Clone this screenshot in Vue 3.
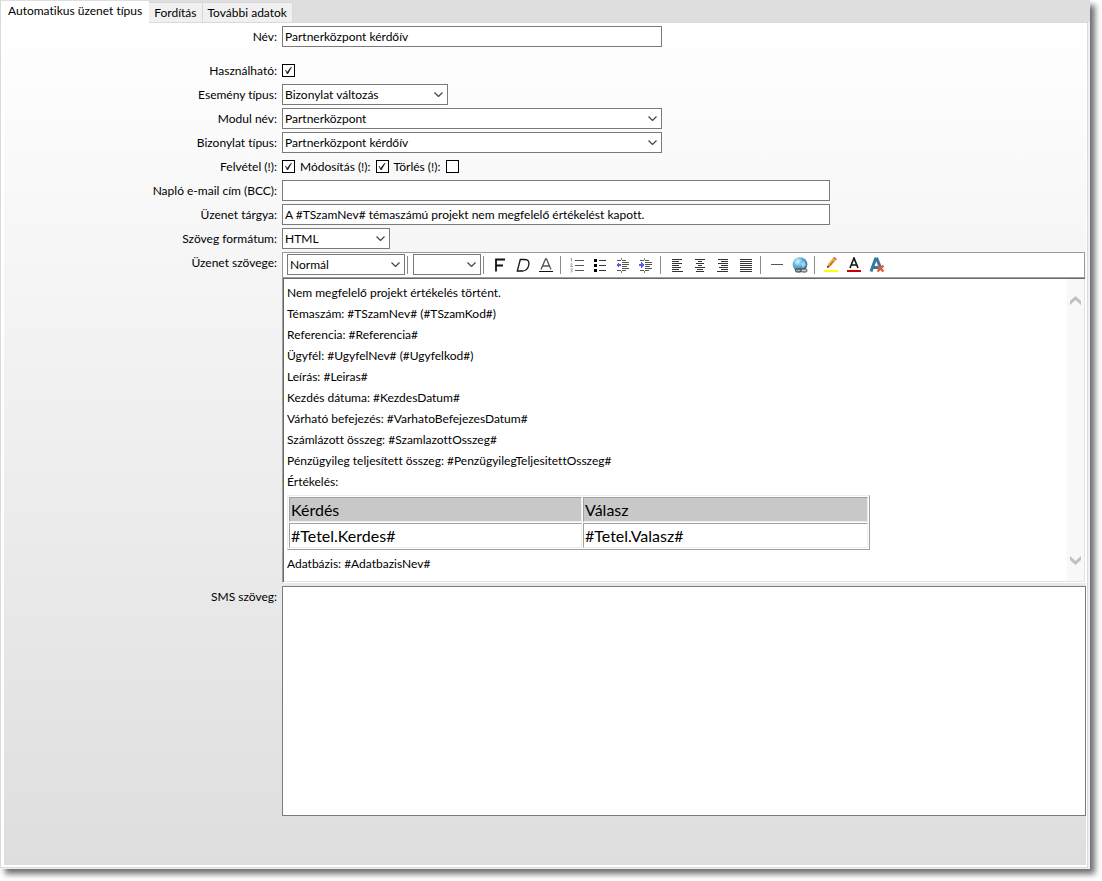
<script setup>
import { ref } from 'vue'

const tabs = ['Automatikus üzenet típus', 'Fordítás', 'További adatok']
const activeTab = ref(0)

const form = ref({
  name: 'Partnerközpont kérdőív',
  usable: true,
  event: 'Bizonylat változás',
  module: 'Partnerközpont',
  document: 'Partnerközpont kérdőív',
  onInsert: true,
  onUpdate: true,
  onDelete: false,
  bcc: '',
  subject: 'A #TSzamNev# témaszámú projekt nem megfelelő értékelést kapott.',
  format: 'HTML',
  style: 'Normál',
  size: '',
  sms: '',
})

const bodyLines = [
  'Nem megfelelő projekt értékelés történt.',
  'Témaszám: #TSzamNev# (#TSzamKod#)',
  'Referencia: #Referencia#',
  'Ügyfél: #UgyfelNev# (#Ugyfelkod#)',
  'Leírás: #Leiras#',
  'Kezdés dátuma: #KezdesDatum#',
  'Várható befejezés: #VarhatoBefejezesDatum#',
  'Számlázott összeg: #SzamlazottOsszeg#',
  'Pénzügyileg teljesített összeg: #PenzügyilegTeljesitettOsszeg#',
  'Értékelés:',
]

const aligns = [
  { label: 'Balra igazítás', lines: [[3, 13], [3, 10], [3, 13], [3, 10], [3, 12], [3, 10], [3, 14]] },
  { label: 'Középre igazítás', lines: [[3, 13], [6, 10], [4, 12], [6, 10], [3, 13], [5, 11], [4, 12]] },
  { label: 'Jobbra igazítás', lines: [[3, 13], [6, 13], [3, 13], [6, 13], [4, 13], [6, 13], [2, 13]] },
  { label: 'Sorkizárt', lines: [[2, 14], [2, 14], [2, 14], [2, 14], [2, 14], [2, 14], [2, 14]] },
]
</script>

<template>
  <main class="window">
    <nav class="tabs" role="tablist">
      <button
        v-for="(tab, i) in tabs"
        :key="tab"
        type="button"
        role="tab"
        class="tab"
        :class="{ active: i === activeTab }"
        :aria-selected="i === activeTab"
        @click="activeTab = i"
      >{{ tab }}</button>
    </nav>

    <form class="panel" @submit.prevent>
      <div class="row first">
        <label class="caption" for="name">Név:</label>
        <input id="name" v-model="form.name" class="field medium" type="text">
      </div>

      <div class="row">
        <label class="caption" for="usable">Használható:</label>
        <input id="usable" v-model="form.usable" class="check" type="checkbox">
      </div>

      <div class="row">
        <label class="caption" for="event">Esemény típus:</label>
        <span class="combo event">
          <select id="event" v-model="form.event" class="field"><option>Bizonylat változás</option></select>
          <svg class="arrow" viewBox="0 0 9 5"><path d="M.5.5l4 4 4-4" /></svg>
        </span>
      </div>

      <div class="row">
        <label class="caption" for="module">Modul név:</label>
        <span class="combo medium">
          <select id="module" v-model="form.module" class="field"><option>Partnerközpont</option></select>
          <svg class="arrow" viewBox="0 0 9 5"><path d="M.5.5l4 4 4-4" /></svg>
        </span>
      </div>

      <div class="row">
        <label class="caption" for="document">Bizonylat típus:</label>
        <span class="combo medium">
          <select id="document" v-model="form.document" class="field"><option>Partnerközpont kérdőív</option></select>
          <svg class="arrow" viewBox="0 0 9 5"><path d="M.5.5l4 4 4-4" /></svg>
        </span>
      </div>

      <div class="row">
        <label class="caption" for="insert">Felvétel (!):</label>
        <span class="checks">
          <input id="insert" v-model="form.onInsert" class="check" type="checkbox">
          <label for="update">Módosítás (!):</label>
          <input id="update" v-model="form.onUpdate" class="check" type="checkbox">
          <label for="delete">Törlés (!):</label>
          <input id="delete" v-model="form.onDelete" class="check" type="checkbox">
        </span>
      </div>

      <div class="row">
        <label class="caption" for="bcc">Napló e-mail cím (BCC):</label>
        <input id="bcc" v-model="form.bcc" class="field wide" type="text">
      </div>

      <div class="row">
        <label class="caption" for="subject">Üzenet tárgya:</label>
        <input id="subject" v-model="form.subject" class="field wide" type="text">
      </div>

      <div class="row">
        <label class="caption" for="format">Szöveg formátum:</label>
        <span class="combo format">
          <select id="format" v-model="form.format" class="field"><option>HTML</option></select>
          <svg class="arrow" viewBox="0 0 9 5"><path d="M.5.5l4 4 4-4" /></svg>
        </span>
      </div>

      <div class="row">
        <span id="body-label" class="caption">Üzenet szövege:</span>
        <div class="editor">
          <div class="toolbar" role="toolbar" aria-label="Formázás">
            <span class="combo style">
              <select v-model="form.style" class="field" aria-label="Stílus"><option>Normál</option></select>
              <svg class="arrow" viewBox="0 0 9 5"><path d="M.5.5l4 4 4-4" /></svg>
            </span>
            <i class="rule tight" />
            <span class="combo size">
              <select v-model="form.size" class="field" aria-label="Méret"><option value="" /></select>
              <svg class="arrow" viewBox="0 0 9 5"><path d="M.5.5l4 4 4-4" /></svg>
            </span>
            <i class="rule near" />

            <button type="button" class="tool" aria-label="Félkövér">
              <svg viewBox="0 0 16 16"><path d="M4 14.500V2.500h9M4 8.500h7" fill="none" stroke="#111" stroke-width="1.800" /></svg>
            </button>
            <button type="button" class="tool" aria-label="Dőlt">
              <svg viewBox="0 0 16 16"><path d="M5.300 2.500h4.200c3.600 0 5 1.700 4.300 5.500-.8 4-3 6-6.500 6H2.300z" fill="none" stroke="#111" stroke-width="1.300" /></svg>
            </button>
            <button type="button" class="tool" aria-label="Aláhúzott">
              <svg viewBox="0 0 16 16"><path d="M3 12.500L7.500 2h1L13 12.500M4.800 9h6.400" fill="none" stroke="#555" stroke-width="1.300" /><path d="M1 14.500h14" stroke="#111" /></svg>
            </button>
            <i class="rule" />

            <button type="button" class="tool" aria-label="Számozott lista">
              <svg viewBox="0 0 16 16"><path d="M6 3.500h9M6 8.500h9M6 13.500h9" stroke="#555" /><path d="M1.500 2l1-.5v3M1.500 7q2-1 1.500.5L1.500 9.500H4M1.500 12h2l-1 1q2 1 0 2h-1" fill="none" stroke="#888" stroke-width=".8" /></svg>
            </button>
            <button type="button" class="tool" aria-label="Felsorolás">
              <svg viewBox="0 0 16 16" shape-rendering="crispEdges"><path d="M2 2h3v3H2zM2 7h3v3H2zM2 12h3v3H2z" /><path d="M7 3.500h7M7 8.500h7M7 13.500h7" stroke="#333" /></svg>
            </button>
            <button type="button" class="tool" aria-label="Behúzás csökkentése">
              <svg viewBox="0 0 16 16" shape-rendering="crispEdges"><path d="M2 3.500h4M7 3.500h4M7 5.500h7M7 7.500h7M7 9.500h5M7 11.500h7M2 13.500h4M7 13.500h4" stroke="#555" /><path d="M6.500 1v2M6.500 14v2" stroke="#777" /><path d="M1 8l3-3v2h2v2H4v2z" fill="#5757f5" /></svg>
            </button>
            <button type="button" class="tool" aria-label="Behúzás növelése">
              <svg viewBox="0 0 16 16" shape-rendering="crispEdges"><path d="M2 3.500h4M7 3.500h4M7 5.500h7M7 7.500h7M7 9.500h5M7 11.500h7M2 13.500h4M7 13.500h4" stroke="#555" /><path d="M6.500 1v2M6.500 14v2" stroke="#777" /><path d="M6 8L3 5v2H1v2h2v2z" fill="#5757f5" /></svg>
            </button>
            <i class="rule" />

            <button v-for="a in aligns" :key="a.label" type="button" class="tool" :aria-label="a.label">
              <svg viewBox="0 0 16 16" shape-rendering="crispEdges">
                <path v-for="(l, i) in a.lines" :key="i" :d="`M${l[0]} ${2.5 + i * 2}H${l[1]}`" stroke="#333" />
              </svg>
            </button>
            <i class="rule" />

            <button type="button" class="tool" aria-label="Vízszintes vonal">
              <svg viewBox="0 0 16 16"><path d="M2 7.500h12" stroke="#555" /></svg>
            </button>
            <button type="button" class="tool" aria-label="Hivatkozás">
              <svg viewBox="0 0 16 16">
                <defs>
                  <radialGradient id="globe" cx=".35" cy=".3" r=".8">
                    <stop offset="0" stop-color="#d5f1fc" /><stop offset=".4" stop-color="#64b5dd" /><stop offset="1" stop-color="#145a91" />
                  </radialGradient>
                </defs>
                <circle cx="8" cy="7.500" r="7.300" fill="url(#globe)" />
                <path d="M3 5l3-3 3 1-2 3-2 1zM9 7l3-3 2 4-3 3z" fill="#bfe8f7" opacity=".7" />
                <rect x="3.500" y="12" width="6" height="3" rx="1.500" fill="#aaa" stroke="#333" /><rect x="9" y="12" width="6" height="3" rx="1.500" fill="#ccc" stroke="#444" />
              </svg>
            </button>
            <i class="rule" />

            <button type="button" class="tool" aria-label="Kiemelés">
              <svg viewBox="0 0 16 16"><path d="M4 11l1-4 5-6 3 2-5 6z" fill="#eda93c" /><path d="M10 1l1-1 3 2-1 1z" fill="#c94b38" /><path d="M10.500 4l-4 5" stroke="#a65c1b" /><path d="M4 11l.7-2.500L6.500 10z" fill="#222" /><path d="M1 13h14v2H1z" fill="#ff0" /></svg>
            </button>
            <button type="button" class="tool" aria-label="Betűszín">
              <svg viewBox="0 0 16 16"><path d="M4 11L8 1l4 10M5.500 8h5" fill="none" stroke="#111" stroke-width="1.600" /><path d="M1 13h14v2H1z" fill="#c00" /></svg>
            </button>
            <button type="button" class="tool" aria-label="Formázás törlése">
              <svg viewBox="0 0 16 16"><path d="M2 14.500L6.500 2h1.500l4 10M4 10.500h6" fill="none" stroke="#32799e" stroke-width="3" /><path d="M8.500 8.500l6 6M14.500 8.500l-6 6" stroke="#e0583f" stroke-width="2.400" /></svg>
            </button>
          </div>

          <div class="document">
            <div class="content" contenteditable="true" role="textbox" aria-multiline="true" aria-labelledby="body-label">
              <p v-for="line in bodyLines" :key="line">{{ line }}</p>
              <table>
                <thead><tr><th>Kérdés</th><th>Válasz</th></tr></thead>
                <tbody><tr><td>#Tetel.Kerdes#</td><td>#Tetel.Valasz#</td></tr></tbody>
              </table>
              <p>Adatbázis: #AdatbazisNev#</p>
            </div>
            <div class="scroll">
              <button type="button" aria-label="Fel"><svg viewBox="0 0 11 9"><path d="M0 5l5.500-5L11 5v4L5.500 4 0 9z" /></svg></button>
              <button type="button" aria-label="Le"><svg viewBox="0 0 11 9"><path d="M0 4l5.500 5L11 4V0L5.500 5 0 0z" /></svg></button>
            </div>
          </div>
        </div>
      </div>

      <div class="row">
        <label class="caption" for="sms">SMS szöveg:</label>
        <textarea id="sms" v-model="form.sms" class="field sms" />
      </div>
    </form>
  </main>
</template>

<style>
body {
  background: #fff;
}
</style>

<style scoped>
.window,
.window * {
  box-sizing: border-box;
}

.window {
  display: flex;
  flex-direction: column;
  min-height: calc(100vh - 12px);
  margin: 0 12px 12px 0;
  padding: 0 2px 1px 0;
  background: #f0f0f0;
  box-shadow: 5px 5px 6px #6e6e6e;
  color: #000;
  font: 12px/16px Lato, "Open Sans", sans-serif;
  font-variant-ligatures: none;
}

button,
input,
select,
textarea {
  margin: 0;
  color: inherit;
  font: inherit;
  font-variant-ligatures: none;
}

.tabs {
  display: flex;
  align-items: flex-end;
  height: 22px;
  margin-right: -2px;
  background: #dedede;
}

.tab {
  height: 20px;
  padding: 0 5px;
  border: 1px solid #d9d9d9;
  border-width: 1px 1px 0 0;
  background: #f0f0f0;
  white-space: nowrap;
}

.tab.active {
  z-index: 1;
  height: 22px;
  margin-bottom: -1px;
  padding: 0 7px 2px;
  border-width: 0 0 0 1px;
  background: #fff;
}

.panel {
  display: flex;
  flex: 1;
  flex-direction: column;
  gap: 3px;
  padding: 3px 0;
  border: 1px solid #dadada;
  background:
    linear-gradient(#fff, #dedede) 3px 0 / calc(100% - 4px) calc(100% - 2px) no-repeat,
    #fff;
}

.row {
  display: flex;
  gap: 5px;
  padding-right: 1px;
}

.row.first {
  margin-bottom: 10px;
}

.caption {
  flex: none;
  width: 276px;
  line-height: 21px;
  text-align: right;
}

.field {
  height: 21px;
  padding: 0 2px;
  border: 1px solid #7a7a7a;
  border-radius: 0;
  background: #fff;
}

.medium {
  width: 380px;
}

.wide {
  width: 548px;
}

.combo {
  position: relative;
  display: flex;
}

.combo .field {
  width: 100%;
  appearance: none;
}

.combo.event {
  width: 166px;
}

.combo.format {
  width: 108px;
}

.combo.style {
  width: 118px;
}

.combo.size {
  width: 68px;
}

.arrow {
  position: absolute;
  top: 8px;
  right: 5px;
  width: 9px;
  height: 5px;
  fill: none;
  stroke: #444;
  stroke-width: 1.2;
  pointer-events: none;
}

.checks {
  display: flex;
  align-items: center;
  gap: 5px;
}

.check {
  align-self: center;
  width: 13px;
  height: 13px;
  border: 1px solid #000;
  background: #fff;
  appearance: none;
}

.check:checked::before {
  display: block;
  width: 11px;
  height: 11px;
  background: #222;
  clip-path: polygon(2px 5px, 3px 5px, 4px 7px, 8px 2px, 9px 2px, 5px 9px, 4px 9px);
  content: "";
}

.editor {
  flex: 1;
  min-width: 0;
}

.toolbar {
  display: flex;
  align-items: center;
  height: 25px;
  margin-right: 1px;
  padding: 0 0 1px 4px;
  border: 1px solid #999;
  border-bottom: 0;
  background: #fff;
}

.rule {
  flex: none;
  width: 1px;
  height: 18px;
  margin: 0 4px 0 3px;
  background: #8a8a8a;
}

.rule.tight {
  margin: 0 5px 0 2px;
}

.rule.near {
  margin: 0 4px 0 2px;
}

.tool {
  display: grid;
  flex: none;
  place-items: center;
  width: 23px;
  height: 23px;
  padding: 0;
  border: 0;
  background: none;
}

.tool svg {
  width: 16px;
  height: 16px;
}

.document {
  display: flex;
  min-height: 306px;
  border: 1px solid #a0a0a0;
  border-right-color: #fff;
  border-bottom-color: #fff;
  background: #fff;
  box-shadow: inset 1px 1px #696969, inset -1px -1px #e3e3e3;
}

.content {
  flex: 1;
  padding: 4px;
  outline: 0;
}

.content p {
  margin: 0;
  line-height: 21px;
}

.content table {
  width: 583px;
  max-width: 100%;
  margin: 3px 0;
  border: 1px solid;
  border-color: #ececec #a0a0a0 #a0a0a0 #ececec;
  border-spacing: 1px;
  font-size: 16px;
  line-height: 21px;
}

.content th,
.content td {
  padding: 1px;
  border: 1px solid;
  border-color: #a0a0a0 #ececec #ececec #a0a0a0;
  font-weight: normal;
  text-align: left;
}

.content th {
  background: #c8c8c8;
}

.content th:first-child {
  width: 293px;
}

.scroll {
  display: flex;
  flex-direction: column;
  justify-content: space-between;
  width: 17px;
  margin: 1px;
  padding: 12px 0;
  background: #f8f8f8;
}

.scroll button {
  display: grid;
  place-items: center;
  height: 18px;
  padding: 0;
  border: 0;
  background: none;
}

.scroll svg {
  width: 11px;
  height: 9px;
  fill: #c0c0c0;
}

.sms {
  flex: 1;
  height: 230px;
  resize: none;
}
</style>
